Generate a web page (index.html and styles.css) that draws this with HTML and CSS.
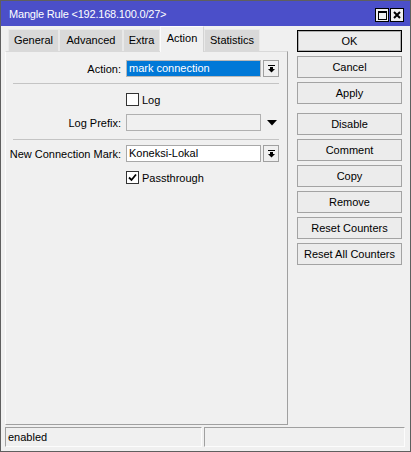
FILE: index.html
```html
<!DOCTYPE html>
<html>
<head>
<meta charset="utf-8">
<link rel="stylesheet" href="styles.css">
</head>
<body>
<div class="window">
  <div class="titlebar">
    <span class="title">Mangle Rule &lt;192.168.100.0/27&gt;</span>
    <div class="tb-btns">
      <span class="tb-btn"><svg width="9" height="9" viewBox="0 0 9 9"><rect x="0.5" y="0.5" width="8" height="8" fill="none" stroke="#000"/><rect x="0" y="0" width="9" height="2" fill="#000"/></svg></span>
      <span class="tb-btn"><svg width="8" height="8" viewBox="0 0 8 8"><path d="M1 1 L7 7 M7 1 L1 7" stroke="#000" stroke-width="2"/></svg></span>
    </div>
  </div>
  <div class="main">
    <div class="left">
      <div class="tabs">
        <div class="tab w-general">General</div>
        <div class="tab w-advanced">Advanced</div>
        <div class="tab w-extra">Extra</div>
        <div class="tab active w-action">Action</div>
        <div class="tab w-stats">Statistics</div>
      </div>
      <div class="panel">
        <div class="row">
          <span class="lbl">Action:</span>
          <div class="field sel">mark connection</div>
          <div class="dd"><svg width="7" height="8" viewBox="0 0 7 8"><rect x="0" y="0" width="7" height="1"/><rect x="2" y="2" width="3" height="2"/><polygon points="0,4 7,4 3.5,7.5"/></svg></div>
        </div>
        <div class="sep sep1"></div>
        <div class="chk-row log-row">
          <span class="box"></span><span class="chk-lbl">Log</span>
        </div>
        <div class="row prefix-row">
          <span class="lbl">Log Prefix:</span>
          <div class="field disabled"></div>
          <svg class="arrow" width="10" height="6" viewBox="0 0 10 6"><polygon points="0,0 10,0 5,5.5"/></svg>
        </div>
        <div class="sep sep2"></div>
        <div class="row mark-row">
          <span class="lbl">New Connection Mark:</span>
          <div class="field">Koneksi-Lokal</div>
          <div class="dd"><svg width="7" height="8" viewBox="0 0 7 8"><rect x="0" y="0" width="7" height="1"/><rect x="2" y="2" width="3" height="2"/><polygon points="0,4 7,4 3.5,7.5"/></svg></div>
        </div>
        <div class="chk-row pass-row">
          <span class="box"><svg width="11" height="11" viewBox="0 0 11 11"><path d="M2 5.5 L4.5 8 L9 2.5" fill="none" stroke="#000" stroke-width="1.8"/></svg></span><span class="chk-lbl">Passthrough</span>
        </div>
      </div>
    </div>
    <div class="actions">
      <div class="btn default">OK</div>
      <div class="btn">Cancel</div>
      <div class="btn">Apply</div>
      <div class="btn spaced">Disable</div>
      <div class="btn">Comment</div>
      <div class="btn">Copy</div>
      <div class="btn">Remove</div>
      <div class="btn">Reset Counters</div>
      <div class="btn">Reset All Counters</div>
    </div>
  </div>
  <div class="status">
    <div class="pane pane1">enabled</div>
    <div class="pane pane2"></div>
  </div>
</div>
</body>
</html>
```
FILE: styles.css
```css
html, body {
  margin: 0;
  padding: 0;
}
body {
  font-family: "Liberation Sans", Arial, sans-serif;
  font-size: 11px;
  color: #000;
  background: #f0f0f0;
}
.window {
  width: 411px;
  height: 452px;
  box-sizing: border-box;
  border: 1px solid #5f5f5f;
  background: #f0f0f0;
  display: flex;
  flex-direction: column;
}
.titlebar {
  height: 25px;
  flex: none;
  background: #4b4fc9;
  color: #fff;
  display: flex;
  align-items: flex-start;
  padding: 0 6px 0 8px;
}
.title {
  line-height: 27px;
  letter-spacing: -0.2px;
}
.tb-btns {
  margin-left: auto;
  margin-top: 7px;
  display: flex;
  gap: 1px;
}
.tb-btn {
  width: 14px;
  height: 14px;
  box-sizing: border-box;
  border: 1px solid #000;
  background: #f0f0f0;
  display: flex;
  align-items: center;
  justify-content: center;
}
.main {
  display: flex;
  height: 399px;
  flex: none;
  padding-left: 4px;
}
.left {
  width: 283px;
  display: flex;
  flex-direction: column;
}
.tabs {
  height: 25px;
  flex: none;
  display: flex;
  align-items: flex-end;
  padding-left: 3px;
  position: relative;
  z-index: 1;
}
.tab {
  height: 22px;
  box-sizing: border-box;
  background: #d9d9d9;
  border: 1px solid #e9e9e9;
  border-bottom: none;
  text-align: center;
  line-height: 21px;
}
.tab.active {
  height: 26px;
  margin-bottom: -1px;
  background: #f0f0f0;
  border-color: #fcfcfc #d4d4d4 #f0f0f0 #fcfcfc;
  line-height: 23px;
}
.w-general { width: 51px; }
.w-advanced { width: 64px; }
.w-extra { width: 37px; }
.w-action { width: 44px; }
.w-stats { width: 56px; }
.panel {
  flex: 1;
  box-sizing: border-box;
  border: 1px solid;
  border-color: #d9d9d9 #a0a0a0 #a0a0a0 #fcfcfc;
  padding-top: 8px;
}
.row {
  display: flex;
  align-items: center;
  height: 17px;
}
.lbl {
  width: 115px;
  flex: none;
  text-align: right;
  margin-right: 5px;
  white-space: nowrap;
}
.field {
  width: 135px;
  height: 17px;
  box-sizing: border-box;
  border: 1px solid #a8a8a8;
  background: #fff;
  padding-left: 2px;
  line-height: 15px;
  flex: none;
}
.field.sel {
  background: #0078d7;
  color: #fff;
  border-color: #b8b8b8;
}
.field.disabled {
  background: #f0f0f0;
  border-color: #b0b0b0;
}
.dd {
  width: 16px;
  height: 17px;
  margin-left: 2px;
  box-sizing: border-box;
  border: 1px solid #a0a0a0;
  background: #f0f0f0;
  display: flex;
  align-items: center;
  justify-content: center;
  flex: none;
}
.arrow {
  margin-left: 6px;
  margin-top: 1px;
}
.sep {
  height: 1px;
  background: #c4c4c4;
  margin: 0 8px 0 7px;
}
.sep1 { margin-top: 6px; }
.sep2 { margin-top: 8px; }
.chk-row {
  display: flex;
  align-items: center;
  height: 13px;
  padding-left: 120px;
}
.log-row { margin-top: 9px; }
.prefix-row { margin-top: 8px; }
.mark-row { margin-top: 5px; }
.pass-row { margin-top: 9px; }
.box {
  width: 13px;
  height: 13px;
  box-sizing: border-box;
  border: 1px solid #333;
  background: #fff;
  display: flex;
  align-items: center;
  justify-content: center;
  flex: none;
}
.chk-lbl {
  margin-left: 3px;
}
.actions {
  width: 105px;
  margin-left: 9px;
  padding-top: 4px;
  display: flex;
  flex-direction: column;
  gap: 4px;
}
.btn {
  height: 22px;
  box-sizing: border-box;
  border: 1px solid #a3a3a3;
  background: #ececec;
  text-align: center;
  line-height: 20px;
}
.btn.default {
  border-color: #000;
  box-shadow: inset 0 0 0 1px #b0b0b0;
}
.btn.spaced {
  margin-top: 5px;
}
.status {
  display: flex;
  gap: 2px;
  height: 20px;
  margin: 2px 0 0 4px;
}
.pane {
  box-sizing: border-box;
  border: 1px solid;
  border-color: #a0a0a0 #fcfcfc #fcfcfc #a0a0a0;
  padding-left: 2px;
  line-height: 18px;
}
.pane1 { width: 197px; }
.pane2 { width: 201px; }
```
